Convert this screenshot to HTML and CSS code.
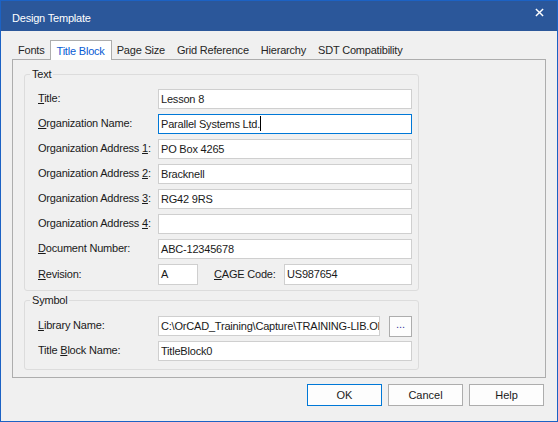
FILE: index.html
```html
<!DOCTYPE html>
<html lang="en">
<head>
  <meta charset="UTF-8" />
  <title>Design Template</title>
  <link rel="stylesheet" href="styles.css">
</head>
<body>

  <div class="window">
    <!-- Title bar -->
    <div class="titlebar">
      <span class="title">Design Template</span>
      <svg class="close" viewBox="0 0 10 10" width="10" height="10">
        <path d="M1 1 L9 9 M9 1 L1 9" />
      </svg>
    </div>

    <div class="content">
      <!-- Tabs -->
      <div class="tabs">
        <div class="tab">Fonts</div>
        <div class="tab active">Title Block</div>
        <div class="tab">Page Size</div>
        <div class="tab">Grid Reference</div>
        <div class="tab">Hierarchy</div>
        <div class="tab">SDT Compatibility</div>
      </div>

      <div class="panel">
        <fieldset class="group">
          <legend>Text</legend>
          <div class="row">
            <span class="label"><u>T</u>itle:</span>
            <div class="field">Lesson 8</div>
          </div>
          <div class="row">
            <span class="label"><u>O</u>rganization Name:</span>
            <div class="field focused">Parallel Systems Ltd.<span class="caret"></span></div>
          </div>
          <div class="row">
            <span class="label">Organization Address <u>1</u>:</span>
            <div class="field">PO Box 4265</div>
          </div>
          <div class="row">
            <span class="label">Organization Address <u>2</u>:</span>
            <div class="field">Bracknell</div>
          </div>
          <div class="row">
            <span class="label">Organization Address <u>3</u>:</span>
            <div class="field">RG42 9RS</div>
          </div>
          <div class="row">
            <span class="label">Organization Address <u>4</u>:</span>
            <div class="field"></div>
          </div>
          <div class="row">
            <span class="label"><u>D</u>ocument Number:</span>
            <div class="field">ABC-12345678</div>
          </div>
          <div class="row row-tall">
            <span class="label"><u>R</u>evision:</span>
            <div class="field small">A</div>
            <span class="label label-cage"><u>C</u>AGE Code:</span>
            <div class="field">US987654</div>
          </div>
        </fieldset>

        <fieldset class="group symbol">
          <legend>Symbol</legend>
          <div class="row">
            <span class="label"><u>L</u>ibrary Name:</span>
            <div class="field clip">C:\OrCAD_Training\Capture\TRAINING-LIB.OLB</div>
            <button class="browse">...</button>
          </div>
          <div class="row">
            <span class="label">Title <u>B</u>lock Name:</span>
            <div class="field">TitleBlock0</div>
          </div>
        </fieldset>
      </div>

      <div class="actions">
        <button class="btn default">OK</button>
        <button class="btn">Cancel</button>
        <button class="btn">Help</button>
      </div>
    </div>
  </div>

</body>
</html>
```

FILE: styles.css
```css
:root {
  --title-bg: #2b579a;
  --frame: #1c62c4;
  --face: #f0f0f0;
  --tab-border: #adadad;
  --group-border: #dcdcdc;
  --field-border: #cfcfcf;
  --focus: #0078d7;
  --text: #1a1a1a;
}

body {
  margin: 0;
  font-family: 'Liberation Sans', Arial, sans-serif;
  font-size: 11px;
  letter-spacing: -0.2px;
  color: var(--text);
  background: var(--face);
}

.window {
  width: 558px;
  height: 422px;
  box-sizing: border-box;
  border: 1px solid var(--frame);
  background: var(--face);
  display: flex;
  flex-direction: column;
}

/* Title bar */
.titlebar {
  height: 30px;
  flex: none;
  background: var(--title-bg);
  color: #fff;
  display: flex;
  align-items: center;
  padding: 0 12px 0 11px;
  justify-content: space-between;
}

.title {
  line-height: 16px;
  padding-top: 3px;
}

.close {
  width: 9px;
  height: 9px;
  margin-top: -8px;
  margin-right: 1px;
}

.close path {
  stroke: #fff;
  stroke-width: 1.6;
  fill: none;
}

.content {
  flex: 1;
  display: flex;
  flex-direction: column;
  padding: 11px 0 0 11px;
}

/* Tabs */
.tabs {
  display: flex;
  height: 17px;
}

.tab {
  padding: 0 6px;
  line-height: 17px;
  color: #262626;
}

.tab.active {
  position: relative;
  z-index: 1;
  margin: -2px -1px -1px;
  height: 19px;
  padding: 0 6px;
  line-height: 21px;
  background: #fff;
  border: 1px solid var(--tab-border);
  border-bottom: none;
  color: #0a5bd3;
}

.panel {
  width: 534px;
  height: 319px;
  box-sizing: border-box;
  border: 1px solid var(--tab-border);
  background: var(--face);
  padding: 6px 0 0 11px;
}

/* Group boxes */
.group {
  width: 395px;
  box-sizing: border-box;
  margin: 0;
  padding: 7px 6px 5px 13px;
  border: 1px solid var(--group-border);
  border-radius: 3px;
}

.group legend {
  padding: 0 2px;
  margin-left: -8px;
  line-height: 16px;
}

.group.symbol {
  margin-top: 1px;
  padding-top: 8px;
  padding-bottom: 8px;
}

.row {
  display: flex;
  align-items: center;
  height: 20px;
  margin-bottom: 5px;
}

.row:last-child {
  margin-bottom: 0;
}

.row-tall {
  height: 21px;
}

.symbol .row:first-child {
  height: 21px;
  margin-bottom: 7px;
}

.label {
  width: 120px;
  flex: none;
  padding-bottom: 2px;
  white-space: nowrap;
}

.label u {
  text-underline-offset: 1px;
}

.label-cage {
  width: 70px;
  margin-left: 16px;
}

.field {
  flex: 1;
  height: 100%;
  box-sizing: border-box;
  border: 1px solid var(--field-border);
  background: #fff;
  padding: 0 2px;
  line-height: 18px;
  white-space: nowrap;
  overflow: hidden;
}

.field.small {
  flex: none;
  width: 40px;
}

.field.focused {
  border-color: var(--focus);
}

.caret {
  display: inline-block;
  width: 1px;
  height: 15px;
  background: #000;
  vertical-align: -3px;
}

.field.clip {
  flex: none;
  width: 222px;
}

.browse {
  margin-left: auto;
  width: 23px;
  height: 21px;
  padding: 0 0 4px;
  border: 1px solid var(--tab-border);
  background: #fdfdfd;
  font: inherit;
  color: #3a3aa0;
}

/* Dialog buttons */
.actions {
  display: flex;
  justify-content: flex-end;
  gap: 6px;
  margin-top: 6px;
  padding-right: 13px;
}

.btn {
  width: 75px;
  height: 22px;
  border: 1px solid var(--tab-border);
  background: #fdfdfd;
  font: inherit;
  color: var(--text);
}

.btn.default {
  border-color: var(--focus);
}
```
